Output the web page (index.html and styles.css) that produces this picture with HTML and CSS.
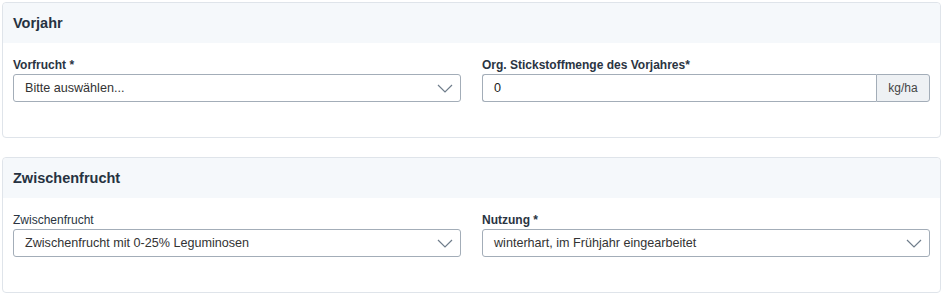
FILE: index.html
```html
<!DOCTYPE html>
<html lang="de">
<head>
    <meta charset="UTF-8">
    <title>Vorjahr / Zwischenfrucht</title>
    <link rel="stylesheet" href="styles.css">
</head>
<body>
    <div class="card">
        <div class="card-header">Vorjahr</div>
        <div class="card-body">
            <div class="field">
                <label class="label bold">Vorfrucht *</label>
                <div class="select">
                    <span>Bitte auswählen...</span>
                    <svg class="chevron" width="16" height="9" viewBox="0 0 16 9"><path d="M1 1 L8 8 L15 1" fill="none" stroke="#6f7d8b" stroke-width="1.2"/></svg>
                </div>
            </div>
            <div class="field">
                <label class="label bold">Org. Stickstoffmenge des Vorjahres*</label>
                <div class="input-group">
                    <div class="input">0</div>
                    <div class="addon">kg/ha</div>
                </div>
            </div>
        </div>
    </div>

    <div class="card">
        <div class="card-header">Zwischenfrucht</div>
        <div class="card-body">
            <div class="field">
                <label class="label">Zwischenfrucht</label>
                <div class="select">
                    <span>Zwischenfrucht mit 0-25% Leguminosen</span>
                    <svg class="chevron" width="16" height="9" viewBox="0 0 16 9"><path d="M1 1 L8 8 L15 1" fill="none" stroke="#6f7d8b" stroke-width="1.2"/></svg>
                </div>
            </div>
            <div class="field">
                <label class="label bold">Nutzung *</label>
                <div class="select">
                    <span>winterhart, im Frühjahr eingearbeitet</span>
                    <svg class="chevron" width="16" height="9" viewBox="0 0 16 9"><path d="M1 1 L8 8 L15 1" fill="none" stroke="#6f7d8b" stroke-width="1.2"/></svg>
                </div>
            </div>
        </div>
    </div>
</body>
</html>
```

FILE: styles.css
```css
/* General */
body {
    margin: 0;
    padding: 2px 2px 0 2px;
    font-family: "Liberation Sans", Arial, sans-serif;
    font-size: 12px;
    color: #333;
    background: #fff;
}

.card {
    border: 1px solid #dfe4ea;
    border-radius: 4px;
    margin-bottom: 19px;
    background: #fff;
}

.card:last-child {
    margin-bottom: 0;
}

.card-header {
    background-color: #f5f8fb;
    height: 40px;
    line-height: 40px;
    padding: 0 10px;
    font-size: 14.5px;
    font-weight: bold;
    color: #263241;
    border-radius: 4px 4px 0 0;
}

.card-body {
    display: grid;
    grid-template-columns: 1fr 1fr;
    column-gap: 21px;
    padding: 13px 10px 35px 10px;
}

.field {
    display: flex;
    flex-direction: column;
}

.label {
    line-height: 18px;
    color: #2a3442;
}

.label.bold {
    font-weight: bold;
}

.select {
    display: flex;
    align-items: center;
    justify-content: space-between;
    height: 26px;
    border: 1px solid #a3adb8;
    border-radius: 3px;
    padding: 0 7px 0 11px;
    font-size: 12.6px;
    color: #333;
}

.chevron {
    display: block;
    margin-top: 1px;
}

.input-group {
    display: flex;
    height: 28px;
}

.input {
    flex: 1;
    border: 1px solid #a3adb8;
    border-right: none;
    border-radius: 3px 0 0 3px;
    padding: 0 11px;
    line-height: 26px;
    font-size: 12.6px;
    color: #222;
}

.addon {
    width: 52px;
    border: 1px solid #a3adb8;
    border-radius: 0 3px 3px 0;
    background: #eef1f4;
    text-align: center;
    line-height: 26px;
    color: #444;
}
```
